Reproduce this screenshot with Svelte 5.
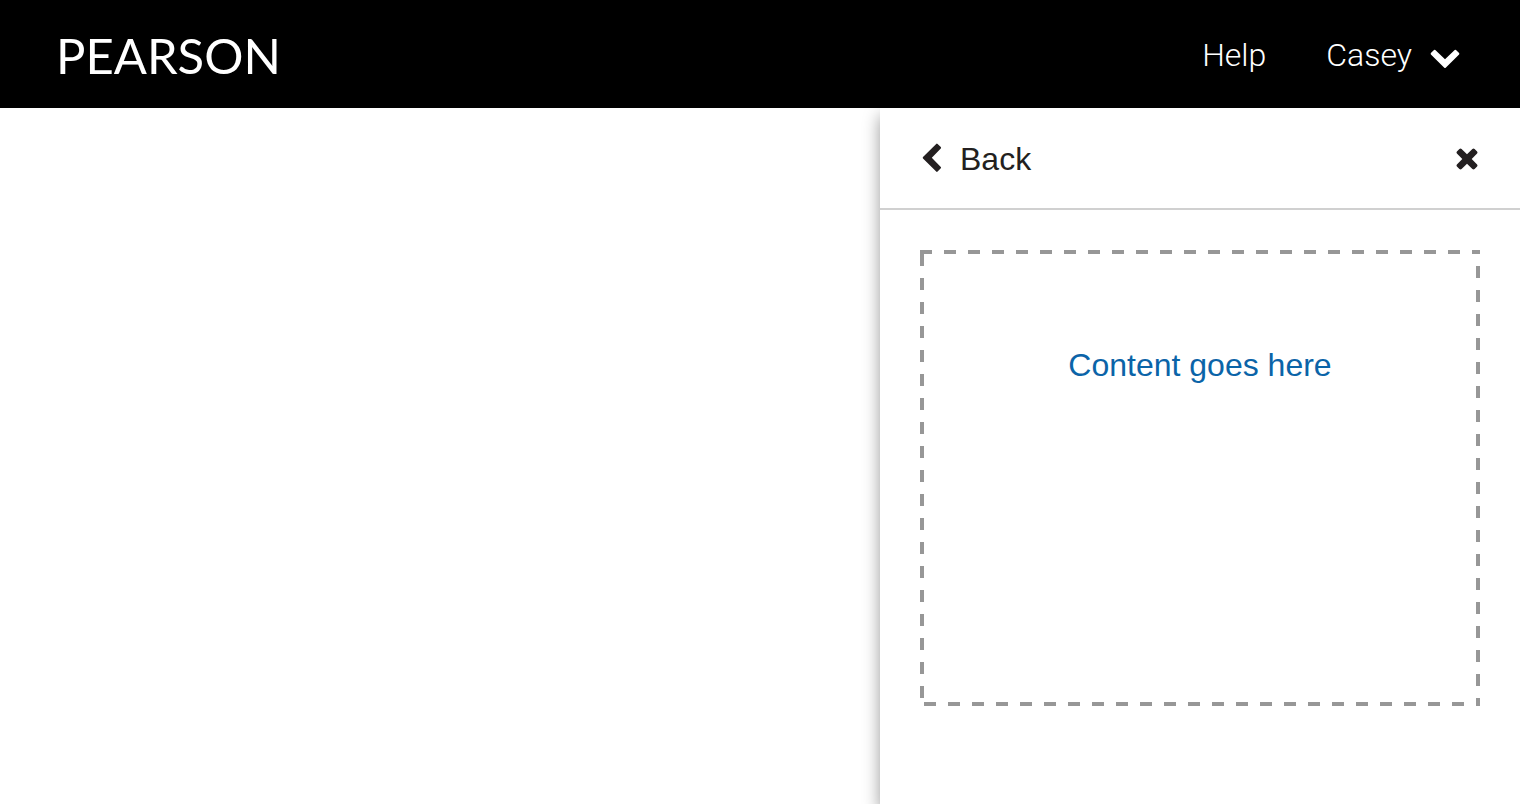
<script>
  let open = $state(true);
</script>

<div class="page">
  <header class="topbar">
    <a class="logo" href="#home">PEARSON</a>
    <nav class="links" aria-label="Account">
      <a href="#help">Help</a>
      <button class="user" type="button" aria-haspopup="true">
        Casey
        <svg width="30" height="20" viewBox="0 0 30 20" aria-hidden="true">
          <path d="M5.3 0.9 15 10.2 24.7 0.9Q25.4 0.5 26 1L29.1 4.1Q29.6 4.8 29.1 5.4L15.7 18.8Q15 19.4 14.3 18.8L0.9 5.4Q0.4 4.8 0.9 4.1L4 1Q4.6 0.5 5.3 0.9Z" fill="#fff" />
        </svg>
      </button>
    </nav>
  </header>

  <main class="body">
    {#if open}
      <aside class="drawer">
        <div class="drawer-head">
          <button class="back" type="button">
            <svg width="20" height="30" viewBox="0 0 20 30" aria-hidden="true">
              <path d="M14.2 0.9Q14.9 0.3 15.6 0.9L18.8 4.1Q19.4 4.8 18.8 5.5L9.8 14.7 18.8 24Q19.4 24.7 18.8 25.3L15.6 28.6Q14.9 29.2 14.2 28.6L1 15.4Q0.4 14.7 1 14Z" fill="#231f20" />
            </svg>
            Back
          </button>
          <button class="close" type="button" aria-label="Close" onclick={() => (open = false)}>
            <svg width="22" height="22" viewBox="0 0 22 22" aria-hidden="true">
              <path d="M3.4 0.9Q4.5 0 5.6 0.9L11 6.3 16.4 0.9Q17.5 0 18.6 0.9L21.1 3.4Q22 4.5 21.1 5.6L15.7 11 21.1 16.4Q22 17.5 21.1 18.6L18.6 21.1Q17.5 22 16.4 21.1L11 15.7 5.6 21.1Q4.5 22 3.4 21.1L0.9 18.6Q0 17.5 0.9 16.4L6.3 11 0.9 5.6Q0 4.5 0.9 3.4Z" fill="#231f20" />
            </svg>
          </button>
        </div>
        <div class="slot">
          <p>Content goes here</p>
        </div>
      </aside>
    {/if}
  </main>
</div>

<style>
  :global(body) {
    margin: 0;
    background: #fff;
  }

  .page {
    display: flex;
    flex-direction: column;
    min-height: 100vh;
    font-family: "Liberation Sans", Arial, sans-serif;
    font-size: 32px;
    line-height: 40px;
    color: #231f20;
  }

  button {
    display: flex;
    align-items: center;
    padding: 0;
    border: 0;
    background: none;
    color: inherit;
    font: inherit;
    cursor: pointer;
  }

  svg {
    display: block;
  }

  .topbar {
    position: relative;
    z-index: 1;
    display: flex;
    align-items: center;
    justify-content: space-between;
    box-sizing: border-box;
    min-height: 108px;
    padding: 2px 60px 0 56px;
    background: #000;
    color: #fff;
  }

  .topbar a {
    color: inherit;
    text-decoration: none;
  }

  .logo {
    font-family: Lato, sans-serif;
    font-size: 49px;
    line-height: 56px;
  }

  .links {
    display: flex;
    align-items: center;
    gap: 60px;
    font-family: Roboto, sans-serif;
    font-weight: 300;
  }

  .user {
    gap: 18px;
  }

  .user svg {
    margin-top: 8px;
  }

  .body {
    display: flex;
    flex: 1;
    justify-content: flex-end;
    overflow: hidden;
  }

  .drawer {
    width: 640px;
    max-width: 100%;
    background: #fff;
    box-shadow: 0 8px 16px rgba(0, 0, 0, 0.4);
  }

  .drawer-head {
    display: flex;
    align-items: center;
    justify-content: space-between;
    box-sizing: border-box;
    height: 102px;
    padding: 2px 42px 0;
    border-bottom: 2px solid #d0d0d0;
  }

  .back {
    gap: 18px;
  }

  .back svg {
    margin-bottom: 2px;
  }

  .slot {
    --dash: #979797 0 12px, transparent 12px 24px;
    box-sizing: border-box;
    min-height: 456px;
    margin: 40px;
    padding: 95px 20px;
    text-align: center;
    color: #0b64a8;
    background:
      repeating-linear-gradient(to right, var(--dash)) 0 0 / 120% 4px no-repeat,
      repeating-linear-gradient(to bottom, var(--dash)) 0 4px / 4px 100% no-repeat,
      repeating-linear-gradient(to right, var(--dash)) left 4px bottom / 100% 4px no-repeat,
      repeating-linear-gradient(to bottom, var(--dash)) right top -8px / 4px 120% no-repeat;
  }

  .slot p {
    margin: 0;
  }
</style>
